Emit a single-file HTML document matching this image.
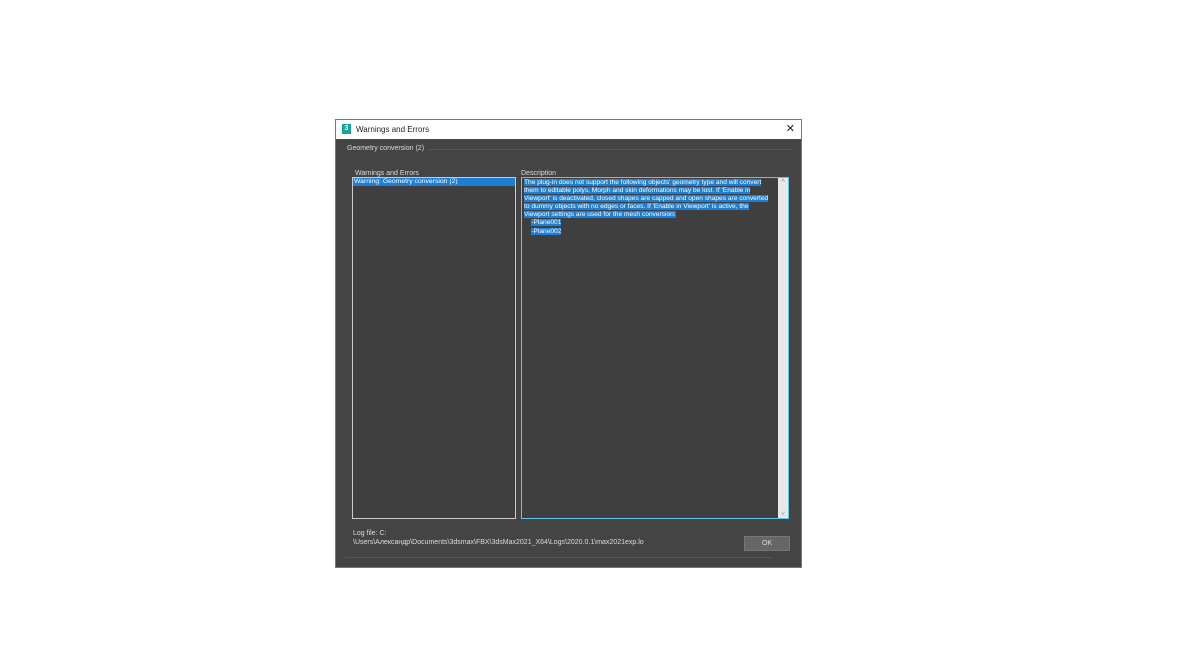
<!DOCTYPE html>
<html><head><meta charset="utf-8"><style>
body{margin:0;width:1180px;height:664px;background:#fff;position:relative;font-family:"Liberation Sans",sans-serif;overflow:hidden}
.dlg{position:absolute;left:335px;top:119px;width:467px;height:449px;background:#444;border:1px solid #777;box-sizing:border-box}
.title{position:absolute;left:0;top:0;width:465px;height:19px;background:#fff;font-size:8px;color:#222;line-height:19px}
.title .ic{position:absolute;left:6px;top:4px;width:9px;height:10px;background:#1aa39a;color:#fff;font-size:7px;line-height:10px;text-align:center;font-weight:bold}
.title .t{position:absolute;left:20px}
.title .x{position:absolute;right:6px;top:0;font-size:11px}
.grp{position:absolute;left:7px;top:32px;width:451px;height:410px;border-top:1px solid #555;border-bottom:1px solid #555}
.lbl{position:absolute;font-size:7px;color:#ddd}
.box{position:absolute;background:#3f3f3f;box-sizing:border-box}
.sel{background:#1c7fd6;color:#fff}
.d{font-size:6.6px;line-height:8.1px;color:#fff}
.d span{background:#1c7fd6}
</style></head><body>
<div class="dlg">
<div class="title"><div class="ic">3</div><div class="t">Warnings and Errors</div><div class="x">✕</div></div>
<div class="lbl" style="left:11px;top:25px">Geometry conversion (2)</div>
<div style="position:absolute;left:92px;top:29px;width:365px;height:1px;background:#555"></div>
<div class="lbl" style="left:19px;top:50px">Warnings and Errors</div>
<div class="lbl" style="left:185px;top:50px">Description</div>
<div class="box" style="left:16px;top:57px;width:164px;height:342px;border:1px solid #ccc">
<div class="sel" style="font-size:6.8px;line-height:8px;padding-left:1px">Warning: Geometry conversion (2)</div></div>
<div class="box" style="left:185px;top:57px;width:268px;height:342px;border:1px solid #5ec8e6">
<div class="d" style="position:absolute;left:2px;top:1px;width:250px"><span>The plug-in does not support the following objects' geometry type and will convert them to editable polys. Morph and skin deformations may be lost. If 'Enable in Viewport' is deactivated, closed shapes are capped and open shapes are converted to dummy objects with no edges or faces. If 'Enable in Viewport' is active, the Viewport settings are used for the mesh conversion:</span><br>&nbsp;&nbsp;&nbsp;&nbsp;<span>-Plane001</span><br>&nbsp;&nbsp;&nbsp;&nbsp;<span>-Plane002</span></div>
<div style="position:absolute;right:0;top:0;width:10px;height:340px;background:#e8e8e8;color:#999;font-size:7px;text-align:center">˄<div style="position:absolute;bottom:0;width:10px">˅</div></div>
</div>
<div class="lbl" style="left:17px;top:409px;line-height:9px">Log file: C:<br>\Users\Александр\Documents\3dsmax\FBX\3dsMax2021_X64\Logs\2020.0.1\max2021exp.lo</div>
<div style="position:absolute;left:408px;top:416px;width:44px;height:13px;background:#666;border:1px solid #777;font-size:7px;color:#ddd;text-align:center;line-height:13px">OK</div>
<div style="position:absolute;left:9px;top:437px;width:428px;height:1px;background:#555"></div>
</div>
</body></html>
